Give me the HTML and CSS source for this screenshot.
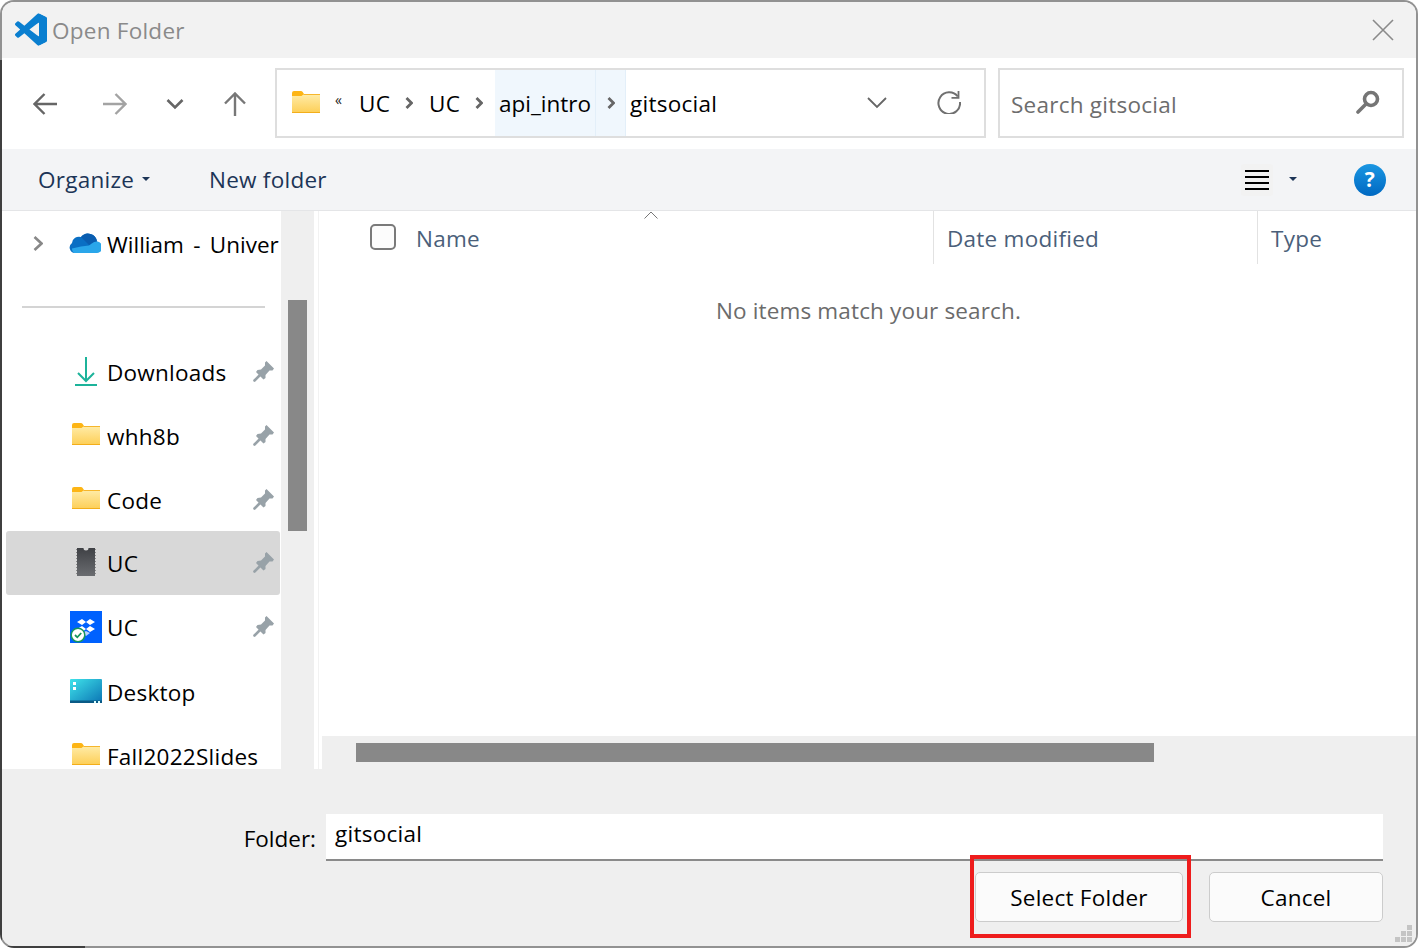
FILE: index.html
```html
<!DOCTYPE html>
<html lang="en">
<head>
<meta charset="utf-8">
<title>Open Folder</title>
<link rel="stylesheet" href="styles.css">
</head>
<body>
<svg class="defs" width="0" height="0" aria-hidden="true">
  <defs>
    <linearGradient id="fg" x1="0" y1="0" x2="0" y2="1"><stop offset="0" stop-color="#ffeca8"/><stop offset="1" stop-color="#fdcf58"/></linearGradient>
    <linearGradient id="chip" x1="0" y1="0" x2="0" y2="1"><stop offset="0" stop-color="#3f4145"/><stop offset="1" stop-color="#6a6c70"/></linearGradient>
    <linearGradient id="desk" x1="0" y1="0" x2="1" y2="1"><stop offset="0" stop-color="#3fe3ea"/><stop offset="1" stop-color="#0b74b4"/></linearGradient>
    <linearGradient id="help" x1="0" y1="0" x2="0" y2="1"><stop offset="0" stop-color="#1a96e2"/><stop offset="1" stop-color="#0069c2"/></linearGradient>
    <clipPath id="vsr"><rect x="17" y="0" width="7" height="24"/></clipPath>
    <symbol id="folder" viewBox="0 0 28 22">
      <path d="M0 2a2 2 0 0 1 2-2h7a2 2 0 0 1 1.500.7L12 3h16v4H0z" fill="#fdb515"/>
      <path d="M0 5l9.500 0L12 3h16v18.500H0z" fill="url(#fg)"/>
      <path d="M0 21h28v1H0z" fill="#f3ae1a"/>
      <path d="M12 3h16v1H11z" fill="#f6b62c"/>
    </symbol>
    <symbol id="pin" viewBox="0 0 22 22">
      <path d="M13.500 1L21 8.500 19.500 10.500 16.500 10.500 12.500 15 12.500 18 10.500 19.500 3 12 4.500 10 8 9.500 12 5.500 12 2.500z" fill="#98a2a8"/>
      <path d="M1.500 20.500L7 15" stroke="#98a2a8" stroke-width="2.600" stroke-linecap="round"/>
    </symbol>
  </defs>
</svg>
<div class="window">
  <div class="inner">
    <header class="title">
      <svg class="vs" viewBox="0 0 24 24">
        <path id="vsp" fill="#0a7fd0" d="M23.150 2.587L18.210.21a1.494 1.494 0 0 0-1.705.29l-9.460 8.630-4.120-3.128a.999.999 0 0 0-1.276.057L.327 7.261A1 1 0 0 0 .326 8.740L3.899 12 .326 15.260a1 1 0 0 0 .001 1.479L1.650 17.940a.999.999 0 0 0 1.276.057l4.120-3.128 9.460 8.630a1.492 1.492 0 0 0 1.704.29l4.942-2.377A1.500 1.500 0 0 0 24 20.060V3.939a1.500 1.500 0 0 0-.85-1.352zm-5.146 14.861L10.826 12l7.178-5.448v10.896z"/>
        <use href="#vsp" class="vs-light" clip-path="url(#vsr)"/>
      </svg>
      <span class="title-text">Open Folder</span>
      <svg class="close" viewBox="0 0 22 22"><path d="M1 1l20 20M21 1L1 21" stroke="#8a8a8a" stroke-width="1.600" fill="none"/></svg>
    </header>

    <nav class="nav">
      <button class="nav-btn gap"><svg class="ico24" viewBox="0 0 24 24"><path d="M1.500 12H24M11.500 2L1.500 12l10 10" stroke="#666" stroke-width="2.400" fill="none"/></svg></button>
      <button class="nav-btn"><svg class="ico24" viewBox="0 0 24 24"><path d="M0 12h22.500M12.500 2l10 10-10 10" stroke="#a3a3a3" stroke-width="2.400" fill="none"/></svg></button>
      <button class="nav-btn"><svg class="ico16" viewBox="0 0 18 12"><path d="M1.500 2l7.500 7.500L16.500 2" stroke="#666" stroke-width="2.600" fill="none"/></svg></button>
      <button class="nav-btn gap"><svg class="ico24" viewBox="0 0 24 24"><path d="M12 1.500V24M2 11.500l10-10 10 10" stroke="#777" stroke-width="2.400" fill="none"/></svg></button>

      <div class="crumbs">
        <svg class="folder"><use href="#folder"/></svg>
        <span class="more">«</span>
        <span class="crumb w70"><span class="crumb-label">UC</span><svg class="sep" viewBox="0 0 8 12"><path d="M1.500 1l5 5-5 5" stroke="#666" stroke-width="2.800" fill="none"/></svg></span>
        <span class="crumb w66"><span class="crumb-label">UC</span><svg class="sep" viewBox="0 0 8 12"><path d="M1.500 1l5 5-5 5" stroke="#666" stroke-width="2.800" fill="none"/></svg></span>
        <span class="seg seg-name">api_intro</span>
        <span class="seg seg-sep"><svg class="sep" viewBox="0 0 8 12"><path d="M1.500 1l5 5-5 5" stroke="#666" stroke-width="2.800" fill="none"/></svg></span>
        <span class="current">gitsocial</span>
        <svg class="drop" viewBox="0 0 20 12"><path d="M1 1l9 9 9-9" stroke="#666" stroke-width="1.800" fill="none"/></svg>
        <svg class="refresh" viewBox="0 0 24 24"><path d="M20.800 6.500A10.800 10.800 0 1 0 23 12" stroke="#707070" stroke-width="2" fill="none"/><path d="M21.500 1v6.800h-7" stroke="#707070" stroke-width="1.800" fill="none"/></svg>
      </div>

      <div class="search">
        <span class="search-text">Search gitsocial</span>
        <svg class="mag" viewBox="0 0 24 24"><circle cx="15" cy="9" r="6.500" stroke="#757575" stroke-width="3.600" fill="none"/><path d="M10 14l-8 8" stroke="#757575" stroke-width="3.600" stroke-linecap="round"/></svg>
      </div>
    </nav>

    <div class="toolbar">
      <span class="tool organize">Organize<i class="caret"></i></span>
      <span class="tool">New folder</span>
      <span class="view"><svg class="lines" viewBox="0 0 24 20"><path d="M0 2h24M0 8h24M0 14h24M0 20h24" stroke="#000" stroke-width="2" transform="translate(0 -1)"/></svg></span>
      <i class="caret view-caret"></i>
      <svg class="help" viewBox="0 0 32 32"><circle cx="16" cy="16" r="16" fill="url(#help)"/><text x="16" y="23" text-anchor="middle" class="help-q">?</text></svg>
    </div>

    <main class="main">
      <aside class="side">
        <div class="row tree"><svg class="expand" viewBox="0 0 10 15"><path d="M1.500 1l7 6.500-7 6.500" stroke="#888" stroke-width="2.600" fill="none"/></svg>
          <svg class="ico" viewBox="0 0 32 22"><path d="M6 21h20a6 6 0 0 0 2-11.500A9 9 0 0 0 12 5 7 7 0 0 0 3 11a5.500 5.500 0 0 0 3 10z" fill="#0a6fc4"/><path d="M12 5a9 9 0 0 1 16 4.500L20 13z" fill="#0a5db0"/><path d="M5 21h22a5 5 0 0 0 1-11.500c-4 0-6 3-8 4l-8 1-9 2a5 5 0 0 0 2 4.500z" fill="#2aa6ea"/></svg>
          <span class="label clip">William - Univer</span></div>
        <hr class="rule">
        <div class="row"><svg class="ico dl" viewBox="0 0 32 30"><path d="M16 1v23M8 17l8 8 8-8M5 29h22" stroke="#1cb39a" stroke-width="2" fill="none"/></svg><span class="label">Downloads</span><svg class="pin"><use href="#pin"/></svg></div>
        <div class="row"><svg class="ico-f"><use href="#folder"/></svg><span class="label">whh8b</span><svg class="pin"><use href="#pin"/></svg></div>
        <div class="row"><svg class="ico-f"><use href="#folder"/></svg><span class="label">Code</span><svg class="pin"><use href="#pin"/></svg></div>
        <div class="row selected"><svg class="ico chipico" viewBox="0 0 32 28"><path d="M7 0h6.500a2.500 2.500 0 0 0 5 0H25v28H7z" fill="url(#chip)"/><path d="M6.500 1v26M25.500 1v26" stroke="#8b8b8b" stroke-width="1" stroke-dasharray="1 2"/></svg><span class="label">UC</span><svg class="pin"><use href="#pin"/></svg></div>
        <div class="row"><svg class="ico box" viewBox="0 0 32 32"><rect width="32" height="32" fill="#0061fe"/><path d="M12 8l-5 3 5 3 4-3zM20 8l-4 3 4 3 5-3zM12 15l-5 3 5 3 4-3zM20 15l-4 3 4 3 5-3z" fill="#fff"/><path d="M12 22l4-2 4 2-4 3z" fill="#b8d2ff"/><circle cx="8" cy="24" r="6.800" fill="#fff" stroke="#17965c" stroke-width="1.500"/><path d="M5 24l2.300 2.300L11.200 22" stroke="#17965c" stroke-width="1.800" fill="none"/></svg><span class="label">UC</span><svg class="pin"><use href="#pin"/></svg></div>
        <div class="row row-desk"><svg class="ico desk" viewBox="0 0 32 24"><rect width="32" height="24" rx="1" fill="url(#desk)"/><rect y="21.500" width="32" height="2.500" fill="#0a5a85"/><rect x="3" y="3" width="3" height="3" fill="#fff"/><rect x="3" y="8" width="3" height="3" fill="#fff"/><rect x="24" y="22" width="2" height="2" fill="#dff"/><rect x="28" y="22" width="2" height="2" fill="#dff"/></svg><span class="label">Desktop</span></div>
        <div class="row"><svg class="ico-f"><use href="#folder"/></svg><span class="label">Fall2022Slides</span></div>
      </aside>
      <div class="vscroll"><div class="vthumb"></div></div>
      <section class="list">
        <div class="head">
          <span class="check"></span>
          <span class="col col-name">Name<svg class="sort" viewBox="0 0 14 8"><path d="M.5 7.500L7 1l6.500 6.500" stroke="#777" stroke-width="1" fill="none"/></svg></span>
          <span class="col col-date">Date modified</span>
          <span class="col col-type">Type</span>
        </div>
        <div class="empty">No items match your search.</div>
        <div class="hscroll"><div class="hthumb"></div></div>
      </section>
    </main>

    <footer class="foot">
      <div class="foot-row">
        <label class="folder-label">Folder:</label>
        <div class="input">gitsocial</div>
      </div>
      <div class="actions">
        <button class="btn btn-select">Select Folder</button>
        <button class="btn btn-cancel">Cancel</button>
      </div>
      <svg class="grip" viewBox="0 0 17 17"><path d="M12 0h5v5h-5zM6 6h5v5H6zM12 6h5v5h-5zM0 12h5v5H0zM6 12h5v5H6zM12 12h5v5h-5z" fill="#c4c4c4"/></svg>
    </footer>
  </div>
</div>
</body>
</html>
```
FILE: styles.css
```css
* { box-sizing: border-box; }
html, body { margin: 0; height: 100%; overflow: hidden; }
body { background: #fff; font-family: "Open Sans", "Noto Sans", sans-serif; font-size: 22.5px; letter-spacing: .25px; color: #000; }
.defs { position: absolute; }
svg { display: block; flex: none; }
.vs-light { fill: #1f9ff2; }

.window {
  width: 1418px; height: 948px; padding: 2px; border-radius: 14px;
  background:
    linear-gradient(#3f3f3f, #3f3f3f) 0 60px / 2px 100% no-repeat,
    linear-gradient(#3f3f3f, #3f3f3f) 0 100% / 85px 2px no-repeat,
    #929292;
}
.inner { height: 944px; border-radius: 12px; overflow: hidden; display: flex; flex-direction: column; background: #fff; position: relative; }

.title { height: 56px; flex: none; background: #f2f2f2; display: flex; align-items: center; padding: 0 22px 0 13px; }
.vs { width: 32px; height: 33px; margin-top: -1px; }
.title-text { margin-left: 5px; color: #8a8a8a; line-height: 1; margin-top: 2px; }
.close { width: 22px; height: 22px; margin-left: auto; margin-top: -1px; }

.nav { height: 91px; flex: none; background: #fff; display: flex; padding: 10px 12px 11px 13px; }
.nav-btn { width: 60px; border: 0; padding: 2px 0 0; background: none; display: flex; align-items: center; justify-content: center; }
.nav-btn.gap { margin-right: 10px; }
.ico24 { width: 24px; height: 24px; }
.ico16 { width: 18px; height: 12px; }

.crumbs { width: 711px; border: 2px solid #dedede; display: flex; align-items: stretch; padding-left: 15px; }
.folder { width: 28px; height: 22px; align-self: center; margin-top: -2px; }
.more { width: 8px; margin-left: 15px; margin-right: 16px; font-size: 14px; line-height: 1; align-self: center; margin-top: -7px; color: #222; }
.crumb { display: flex; align-items: center; }
.w70 { width: 70px; }
.w66 { width: 66px; }
.crumb-label { width: 46px; }
.sep { width: 8px; height: 12px; }
.seg { background: #f0f7fd; display: flex; align-items: center; }
.seg-name { width: 101px; padding-left: 4px; border-right: 1px solid #e3eff9; letter-spacing: 0; }
.seg-sep { width: 30px; justify-content: center; border-right: 1px solid #e3eff9; }
.current { margin-left: 4px; align-self: center; }
.drop { width: 20px; height: 12px; align-self: center; margin-left: auto; }
.refresh { width: 24px; height: 24px; align-self: center; margin-left: 50px; margin-right: 23px; margin-top: -3px; }

.search { width: 406px; margin-left: 12px; border: 2px solid #dedede; display: flex; align-items: center; justify-content: space-between; padding: 0 22px 0 11px; }
.search-text { color: #6d6d6d; margin-top: 2px; }
.mag { width: 24px; height: 24px; margin-top: -2px; }

.toolbar { height: 62px; flex: none; background: #f3f4f6; border-bottom: 1px solid #e4e5e7; display: flex; align-items: center; padding: 0 30px 0 36px; }
.tool { color: #1c3557; display: flex; align-items: center; }
.organize { width: 171px; }
.caret { display: block; border: 4.500px solid transparent; border-top: 4.500px solid #1c3557; border-bottom: 0; margin-left: 8px; margin-top: -2px; }
.view { width: 32px; height: 32px; margin-left: auto; background: #f2f2f2; border-radius: 3px; display: flex; align-items: center; justify-content: center; }
.lines { width: 24px; height: 20px; }
.view-caret { margin-left: 16px; }
.help { width: 32px; height: 32px; margin-left: 57px; }
.help-q { fill: #fff; font-size: 21px; font-weight: 700; font-family: "Open Sans", sans-serif; }

.main { flex: 1; min-height: 0; display: flex; background: #fff; }
.side { width: 279px; flex: none; padding: 1px 0 0 4px; overflow: hidden; background: #fff; }
.row { height: 64px; width: 274px; display: flex; align-items: center; padding-left: 64px; border-radius: 3px; }
.row.tree { padding-left: 27px; }
.row.selected { background: #d8d8d8; margin-top: -1px; }
.row-desk { margin-top: 1px; }
.expand { width: 10px; height: 15px; margin-right: 26px; margin-top: -2px; }
.ico { width: 32px; }
.tree .ico { height: 22px; margin-top: -2px; }
.tree .label { margin-left: 6px; }
.dl { height: 30px; margin-top: -2px; }
.chipico { height: 28px; margin-top: -2px; }
.box { height: 32px; }
.desk { height: 24px; margin-top: -2px; }
.ico-f { width: 28px; height: 22px; margin: -5px 2px 0 2px; }
.label { margin-left: 5px; line-height: 1.2; white-space: nowrap; }
.clip { word-spacing: 3.500px; letter-spacing: 0; }
.pin { width: 22px; height: 22px; margin-left: auto; margin-right: 5px; margin-top: -2px; }
.rule { height: 2px; border: 0; background: #d4d4d4; margin: 30px 0 32px 16px; width: 243px; }

.vscroll { width: 33px; flex: none; background: #efefef; padding: 89px 7px 0; }
.vthumb { height: 231px; background: #888; }

.list { flex: 1; min-width: 0; display: flex; flex-direction: column; margin-left: 4px; border-left: 1px solid #f2f2f2; }
.head { height: 53px; flex: none; display: flex; align-items: center; padding-left: 51px; }
.check { width: 26px; height: 26px; border: 2px solid #7a7a7a; border-radius: 5px; background: #fcfcfc; margin-top: -1px; }
.col { color: #4b5f7a; height: 53px; display: flex; align-items: center; padding-top: 1px; }
.col-name { margin-left: 20px; width: 517px; position: relative; }
.sort { position: absolute; left: 228px; top: 0; width: 14px; height: 8px; }
.col-date { width: 324px; padding-left: 13px; border-left: 1px solid #e2e2e2; }
.col-type { padding-left: 13px; border-left: 1px solid #e2e2e2; }
.empty { flex: 1; text-align: center; color: #6b6b6b; padding-top: 31px; padding-left: 2px; letter-spacing: .15px; }
.hscroll { height: 33px; flex: none; margin-left: 3px; background: #efefef; padding: 7px 0 0 34px; }
.hthumb { width: 798px; height: 19px; background: #888; }

.foot { height: 177px; flex: none; background: #efefef; position: relative; padding: 45px 33px 0 0; }
.foot-row { display: flex; justify-content: flex-end; }
.folder-label { margin-right: 10px; align-self: flex-end; line-height: 1; margin-bottom: 11px; letter-spacing: 0; }
.input { width: 1057px; height: 47px; background: #fff; border-bottom: 2px solid #8a8a8a; padding-left: 9px; line-height: 40px; }
.actions { display: flex; justify-content: flex-end; gap: 26px; margin-top: 11px; }
.btn { height: 50px; border: 1px solid #cccccc; border-radius: 5px; background: #fbfbfb; font: inherit; letter-spacing: inherit; color: #000; padding: 0; }
.btn-select { width: 208px; position: relative; }
.btn-select::after { content: ""; position: absolute; left: -6px; right: -9px; top: -18px; bottom: -17px; border: 4px solid #ee1c1c; }
.btn-cancel { width: 174px; }
.grip { position: absolute; right: 4px; bottom: 4px; width: 17px; height: 17px; }
```
